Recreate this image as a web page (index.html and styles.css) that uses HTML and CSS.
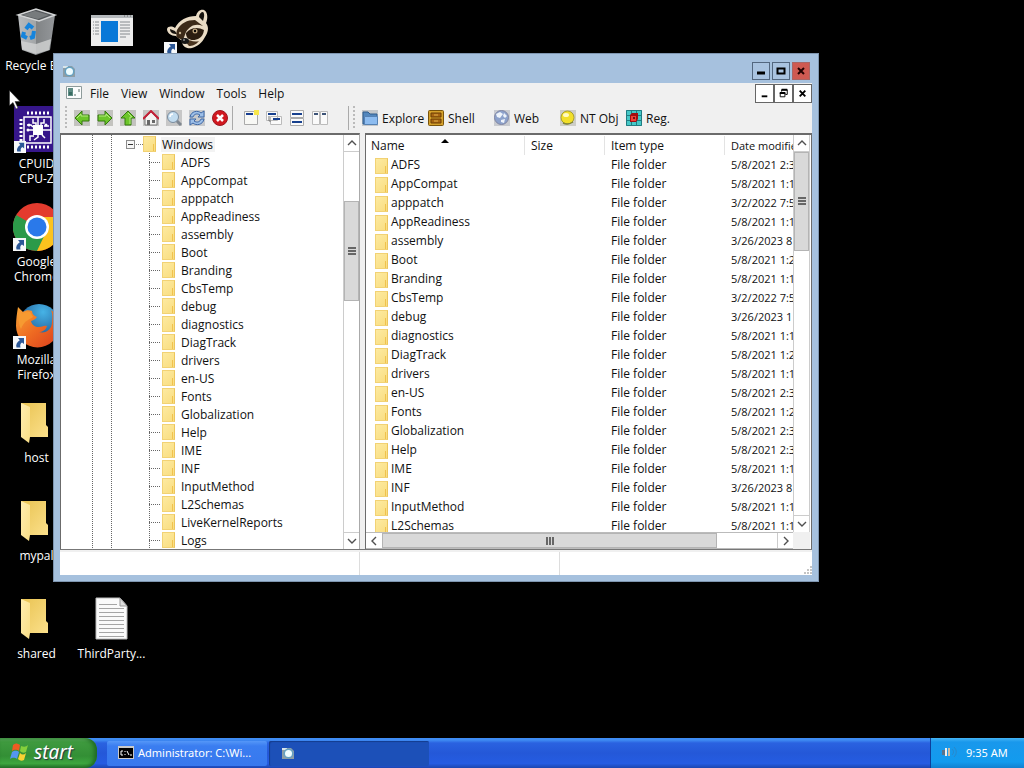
FILE: index.html
```html
<!DOCTYPE html>
<html lang="en">
<head>
<meta charset="utf-8">
<title>Desktop</title>
<link rel="stylesheet" href="styles.css">
</head>
<body>
<svg class="defs" aria-hidden="true">
  <defs>
    <linearGradient id="gf" x1="0" y1="0" x2="1" y2="1"><stop offset="0" stop-color="#e9c352"/><stop offset="1" stop-color="#fbe08b"/></linearGradient>
    <linearGradient id="gfl" x1="0" y1="0" x2="1" y2="1"><stop offset="0" stop-color="#ffedb0"/><stop offset="1" stop-color="#fadf86"/></linearGradient>
    <linearGradient id="gbin" x1="0" y1="0" x2="1" y2="0"><stop offset="0" stop-color="#b9bcbe"/><stop offset=".48" stop-color="#a2a5a7"/><stop offset=".5" stop-color="#818486"/><stop offset="1" stop-color="#94979a"/></linearGradient>
    <linearGradient id="gfox" x1="0" y1="0" x2="1" y2="1"><stop offset="0" stop-color="#f8a534"/><stop offset=".5" stop-color="#ee6b22"/><stop offset="1" stop-color="#d93c1c"/></linearGradient>
    <radialGradient id="ggl" cx=".6" cy=".2" r=".9"><stop offset="0" stop-color="#46b3e6"/><stop offset="1" stop-color="#123a78"/></radialGradient>
    <symbol id="bigfolder" viewBox="0 0 28 42"><path d="M1 1h25v22l2 2v10H6z" fill="url(#gf)"/><path d="M1 1l9 4v30l-1 6-8-6z" fill="url(#gfl)"/></symbol>
    <symbol id="shortcut" viewBox="0 0 13 13"><path d="M0 0h13v13H0z" fill="#f6f8fa"/><path d="M5 2h6v6L9 6.500C7 8 7 9 7.500 11.500H3.500C2.500 8.500 4 6 6.800 4.200z" fill="#2b5797"/></symbol>
    <symbol id="arrow" viewBox="0 0 16 16"><path d="M0 0h16v16H0z" fill="#c3c3bf"/><path d="M1 8l7-7v4h7v6H8v4z" fill="#6cc52a" stroke="#34780f"/><path d="M3 8l4-4v2h7" fill="none" stroke="#b4ea7e"/></symbol>
    <symbol id="app" viewBox="0 0 14 14"><path d="M1 2h9l3 3v8H1z" fill="#8f9da5"/><path d="M1 2h5v2H1z" fill="#d9e5e9"/><circle cx="7.500" cy="7.500" r="5" fill="#64a1c2"/><circle cx="7.500" cy="7.500" r="3.500" fill="#effcff"/></symbol>
    <symbol id="up" viewBox="0 0 10 10"><path d="M1 7l4-4 4 4" fill="none" stroke="#505050" stroke-width="1.400"/></symbol>
  </defs>
</svg>

<main class="desktop">
  <div class="icons">
    <div class="shortcut c1 r1"><svg class="pic" viewBox="0 0 48 48"><path d="M5 8l18-6 19 6-5 35-14 5-14-5z" fill="url(#gbin)"/><path d="M5 8l18-6 19 6-16 6z" fill="#54585b" stroke="#d3d5d6" stroke-width="1.500"/><path d="M9 8l13-4 14 4-11 4z" fill="#777b7d"/><path d="M8 34l15 3 15-5-2 11-13 4-14-5z" fill="#d2d3d3" opacity=".8"/><g fill="none" stroke="#1684dc" stroke-width="4"><path d="M13 22l3-4 4 3"/><path d="M21 24l-1 6-3 1"/><path d="M14 31l-4-2 1-4"/></g></svg><span>Recycle Bin</span></div>
    <div class="shortcut c2 r1"><svg class="pic" viewBox="0 0 48 48"><path d="M3 8h42v31H3z" fill="#ededed"/><path d="M3 8h42v3H3z" fill="#b5b9bc"/><path d="M36 9h1m2 0h1m2 0h1" stroke="#666"/><path d="M13 14h17v21H13z" fill="#0878d8"/><path d="M5 15h1M5 18h1M5 21h1M5 24h1M5 27h1M7 15h4M7 18h4M7 21h4M7 24h4M7 27h4M32 15h10M32 18h10M32 21h10M32 24h10M32 27h10M32 30h6" stroke="#858a8e"/></svg></div>
    <div class="shortcut c3 r1"><svg class="pic" viewBox="0 0 48 48"><path d="M3 22c1-3 5-3 8-1 4-8 12-12 21-12 1-4 4-7 8-6 4 2 4 9 2 13 4 5 1 11-1 14-3 6-7 9-13 11-5 1-10-1-10-7l-6-5c-5 0-9-3-9-7z" fill="#eadcc5"/><path d="M6 22l5 2 2 3c-4 0-7-1-7-5zM35 10c0-3 2-5 4-5 2 2 1 6 0 9z" fill="#17130e"/><path d="M13 23c4-7 10-10 18-10l8 6c-8-3-13 0-17 6l-3 8-5-2c-2-1-2-5-1-8z" fill="#3c2a18"/><path d="M22 26c5-6 12-6 18-3-1 8-7 10-11 10-4 0-7-2-7-7z" fill="#2b1d10"/><path d="M20 33c5-1 9 3 15 1-3 4-7 5-10 5z" fill="#4a3520"/><circle cx="31" cy="24" r="2.500" fill="#bfa67f"/><circle cx="31" cy="24" r="1.200" fill="#000"/><circle cx="16" cy="26" r="1.200" fill="#c9b694"/><ellipse cx="21" cy="34" rx="4" ry="3" fill="#161616"/><circle cx="20" cy="33" r="1" fill="#888"/><use href="#shortcut" x="0" y="35" width="13" height="13"/></svg></div>
    <div class="shortcut c1 r2"><svg class="pic" viewBox="0 0 48 48"><path d="M1 1h47v46H1z" fill="#36168a"/><g fill="none" stroke="#fff"><path d="M14 8h22M14 42h22" stroke-width="3" stroke-dasharray="2 2"/><path d="M8 14v22M42 14v22" stroke-width="3" stroke-dasharray="2 2"/><path d="M11 12h27v26H11z" stroke-width="1.500"/><path d="M25 12v8M20 14v4h3v3M31 14v4h-3v3M14 20h4l2 2M14 25h6M30 25h8M31 21h5M25 29v3l-4 3M17 36v-5h4M29 30l3 3" stroke-width="1.500"/></g><path d="M20 20h10v10H20z" fill="#fff"/><g fill="#fff"><circle cx="16" cy="20" r="1.500"/><circle cx="15" cy="25" r="1.500"/><circle cx="33" cy="20" r="1.500"/></g><use href="#shortcut" x="1" y="36" width="12" height="12"/></svg><span>CPUID<br>CPU-Z</span></div>
    <div class="shortcut c1 r3"><svg class="pic" viewBox="0 0 48 48"><circle cx="24" cy="24" r="24" fill="#e33b2e"/><path d="M24 24L3.200 12A24 24 0 0 0 24 48l9-16z" fill="#2c9a49"/><path d="M24 14h21.600A24 24 0 0 1 24 48l9-19z" fill="#fcc31e"/><circle cx="24" cy="24" r="12" fill="#fff"/><circle cx="24" cy="24" r="9.500" fill="#2a79ea"/><use href="#shortcut" x="0" y="35" width="13" height="13"/></svg><span>Google Chrome</span></div>
    <div class="shortcut c1 r4"><svg class="pic" viewBox="0 0 48 48"><circle cx="26" cy="23" r="20" fill="url(#ggl)"/><path d="M5 6l5 5c3-2 6-2 9-1 0 3 2 5 5 6-2 3-4 3-6 4 1 4 4 6 8 6 3 0 5-2 8-1-1 4-5 6-8 6 7 2 13-3 13-10 1-7 0-9-1-12 6 5 9 9 8 16a21 21 0 0 1-43 0C3 18 4 12 5 6z" fill="url(#gfox)"/><path d="M6 9l3 4c3-2 6-2 8-2l3 5-5 3c-4 2-6 6-7 9-3-6-3-13-2-19z" fill="#f69a31"/><use href="#shortcut" x="0" y="35" width="13" height="13"/></svg><span>Mozilla Firefox</span></div>
    <div class="shortcut c1 r5"><svg class="pic" viewBox="0 0 48 48"><use href="#bigfolder" x="7" y="3" width="28" height="42"/></svg><span>host</span></div>
    <div class="shortcut c1 r6"><svg class="pic" viewBox="0 0 48 48"><use href="#bigfolder" x="7" y="3" width="28" height="42"/></svg><span>mypal</span></div>
    <div class="shortcut c1 r7"><svg class="pic" viewBox="0 0 48 48"><use href="#bigfolder" x="7" y="3" width="28" height="42"/></svg><span>shared</span></div>
    <div class="shortcut c2 r7"><svg class="pic" viewBox="0 0 48 48"><path d="M8 3h24l7 8v33H8z" fill="#fafafa" stroke="#bbb"/><path d="M32 3v8h7z" fill="#ddd" stroke="#999"/><path d="M11 9.500h18M11 13.500h25M11 17.500h25M11 21.500h25M11 25.500h25M11 29.500h25M11 33.500h25M11 37.500h25M11 41.500h25" stroke="#a5a5a5"/></svg><span>ThirdParty...</span></div>
  </div>

  <section class="window" aria-label="File explorer">
    <header class="titlebar">
      <svg class="appicon"><use href="#app"/></svg>
      <div class="caption">
        <button aria-label="Minimize"><svg viewBox="0 0 16 16"><path d="M4 10h8" stroke="#000" stroke-width="3"/></svg></button>
        <button aria-label="Maximize"><svg viewBox="0 0 16 16"><path d="M4.500 5.500h7v5h-7z" fill="none" stroke="#000" stroke-width="2"/></svg></button>
        <button class="close" aria-label="Close"><svg viewBox="0 0 16 16"><path d="M5 5l6 6M11 5l-6 6" stroke="#200" stroke-width="2"/></svg></button>
      </div>
    </header>
    <div class="client">
      <nav class="menubar">
        <svg class="mdiicon" viewBox="0 0 16 14"><path d="M.5.500h15v12H.5z" fill="#fcfdfd" stroke="#8e9b9b"/><path d="M2 2h5v8H2z" fill="#5e8c84"/><path d="M3 6h3v3H3z" fill="#396c62"/><path d="M8 9h2M13 3v3" stroke="#5d706c"/></svg>
        <button>File</button><button>View</button><button>Window</button><button>Tools</button><button>Help</button>
        <div class="mdi">
          <button aria-label="Minimize child"><svg viewBox="0 0 16 16"><path d="M5 11h6" stroke="#000" stroke-width="2"/></svg></button>
          <button aria-label="Restore child"><svg viewBox="0 0 16 16"><path d="M6 6V4h6v5h-2M4.500 7.500h5v4h-5z" fill="none" stroke="#000"/><path d="M6 4h6M4 7.500h6" stroke="#000" stroke-width="2"/></svg></button>
          <button aria-label="Close child"><svg viewBox="0 0 16 16"><path d="M5 5l6 6M11 5l-6 6" stroke="#000" stroke-width="2"/></svg></button>
        </div>
      </nav>
      <div class="toolbar">
        <div class="band tools">
          <button aria-label="Back"><svg><use href="#arrow"/></svg></button>
          <button aria-label="Forward"><svg class="flip"><use href="#arrow"/></svg></button>
          <button aria-label="Up"><svg class="turn"><use href="#arrow"/></svg></button>
          <button aria-label="Home"><svg viewBox="0 0 16 16"><path d="M0 0h16v16H0z" fill="#c5c5c3"/><path d="M2 8l6-6 6 6v7H2z" fill="#f4f4f2" stroke="#777"/><path d="M0 9l8-8 8 8" fill="none" stroke="#c51f35" stroke-width="2"/><path d="M4 10h3v5H4zM9 10h3v3H9z" fill="#686868"/></svg></button>
          <button aria-label="Search"><svg viewBox="0 0 16 16"><path d="M0 0h16v16H0z" fill="#c7c7c7"/><path d="M10 10l5 5" stroke="#7f8790" stroke-width="3"/><circle cx="7" cy="7" r="5.500" fill="#c2dcef" stroke="#798b9d"/><path d="M4 7c0-2 1-3 3-3" fill="none" stroke="#fff" stroke-width="1.500"/></svg></button>
          <button aria-label="Refresh"><svg viewBox="0 0 16 16"><path d="M0 0h16v16H0z" fill="#c7c9cc"/><path d="M1 7c1-6 8-7 11-4l3-2v6H9l2-2C8 3 5 4 4 7zM15 9c-1 6-8 7-11 4l-3 2V9h6l-2 2c3 2 6 1 7-2z" fill="#9dbfe8" stroke="#3f68a6"/></svg></button>
          <button aria-label="Stop"><svg viewBox="0 0 16 16"><circle cx="8" cy="8" r="7.500" fill="#d11820" stroke="#9c1720"/><path d="M5 5l6 6M11 5l-6 6" stroke="#fff" stroke-width="2.500"/></svg></button>
        </div>
        <div class="band views">
          <button aria-label="New window"><svg viewBox="0 0 16 16"><path d="M1.500 1.500h13v13h-13z" fill="#f8f8f5" stroke="#aaa"/><path d="M3 4h7" stroke="#183e91" stroke-width="2"/><path d="M11 0h5v5h-5z" fill="#f8e74c"/></svg></button>
          <button aria-label="Cascade"><svg viewBox="0 0 16 16"><path d="M.5 1.500h11v9H.5zM4.500 6.500h11v8h-11z" fill="#fafafa" stroke="#bbb"/><path d="M2 4h8M7 9h7" stroke="#17408e" stroke-width="2"/><path d="M3 6v5h2" fill="none" stroke="#777"/></svg></button>
          <button aria-label="Tile horizontally"><svg viewBox="0 0 16 16"><path d="M1.500.500h13v7h-13zM1.500 8.500h13v7h-13z" fill="#fafafa" stroke="#aaa"/><path d="M3 4h10M3 12h10" stroke="#17408e" stroke-width="2"/></svg></button>
          <button aria-label="Tile vertically"><svg viewBox="0 0 16 16"><path d="M.5 1.500h7v13h-7zM8.500 1.500h7v13h-7z" fill="#fafafa" stroke="#bbb"/><path d="M2 4h4M10 4h4" stroke="#3c5377" stroke-width="2"/></svg></button>
        </div>
        <div class="band places">
          <button><svg viewBox="0 0 16 16"><path d="M0 0h16v16H0z" fill="#c4c7ca"/><path d="M1 14V2h5l2 2h7v10z" fill="#5387bd" stroke="#315d8d"/><path d="M2.500 6.500h13v8h-13z" fill="#8dbcf0" stroke="#5682b4"/></svg>Explore</button>
          <button><svg viewBox="0 0 16 16"><rect x=".5" y=".5" width="15" height="15" rx="1" fill="#d5a12b" stroke="#79540c"/><path d="M3 3h10v4H3zM3 9h10v4H3z" fill="#a86512" stroke="#6c3e06"/><path d="M6 5h4M6 11h4" stroke="#e2b24d"/></svg>Shell</button>
          <button><svg viewBox="0 0 16 16"><path d="M0 0h16v16H0z" fill="#c9cbd0"/><circle cx="7.500" cy="7.500" r="7" fill="#8da2cc" stroke="#8186a2"/><path d="M2 4l4-2 3 2-3 4-3-1zM10 3l3 3-2 2-2-2zM7 10l4-1-1 4-3-1z" fill="#eef3fa"/></svg>Web</button>
          <button><svg viewBox="0 0 16 16"><path d="M0 0h16v16H0z" fill="#cdcdc7"/><circle cx="7.500" cy="7.500" r="6.500" fill="#f2df28" stroke="#aaa02b"/><ellipse cx="6" cy="5" rx="3" ry="2" fill="#fffac0"/><path d="M3 13c4 2 7 1 10-1" fill="none" stroke="#81863b" stroke-width="1.500"/></svg>NT Obj</button>
          <button><svg viewBox="0 0 16 16"><path d="M0 0h16v16H0z" fill="#45c8c7"/><path d="M.5.500h15v15H.5zM0 5.500h16M0 10.500h16M5.500 0v16M10.500 0v16" fill="none" stroke="#217b81"/><path d="M4 5l2-2h6v6l-2 3H4z" fill="#a40c10"/><path d="M5 6h5v5H5z" fill="#f04136"/><path d="M7 7h2v2H7z" fill="#731014"/></svg>Reg.</button>
        </div>
      </div>

      <div class="panes">
        <div class="pane treepane">
          <div class="tree">
            <div class="root"><button class="expander" aria-label="Collapse Windows"></button><i class="stub"></i><i class="folder"></i><span>Windows</span></div>
            <ul>
              <li><i class="folder"></i>ADFS</li><li><i class="folder"></i>AppCompat</li><li><i class="folder"></i>apppatch</li><li><i class="folder"></i>AppReadiness</li><li><i class="folder"></i>assembly</li><li><i class="folder"></i>Boot</li><li><i class="folder"></i>Branding</li><li><i class="folder"></i>CbsTemp</li><li><i class="folder"></i>debug</li><li><i class="folder"></i>diagnostics</li><li><i class="folder"></i>DiagTrack</li><li><i class="folder"></i>drivers</li><li><i class="folder"></i>en-US</li><li><i class="folder"></i>Fonts</li><li><i class="folder"></i>Globalization</li><li><i class="folder"></i>Help</li><li><i class="folder"></i>IME</li><li><i class="folder"></i>INF</li><li><i class="folder"></i>InputMethod</li><li><i class="folder"></i>L2Schemas</li><li><i class="folder"></i>LiveKernelReports</li><li><i class="folder"></i>Logs</li>
            </ul>
          </div>
          <div class="scroll vertical treescroll">
            <button aria-label="Scroll tree up"><svg><use href="#up"/></svg></button>
            <div class="before"></div><div class="thumb"></div><div class="after"></div>
            <button aria-label="Scroll tree down"><svg class="half"><use href="#up"/></svg></button>
          </div>
        </div>
        <div class="pane listpane">
          <div class="list">
            <table>
              <colgroup><col class="name"><col class="size"><col class="type"><col class="date"></colgroup>
              <thead><tr><th class="sorted">Name</th><th>Size</th><th>Item type</th><th>Date modified</th></tr></thead>
              <tbody>
                <tr><td><i class="folder"></i>ADFS</td><td></td><td>File folder</td><td>5/8/2021 2:3</td></tr>
                <tr><td><i class="folder"></i>AppCompat</td><td></td><td>File folder</td><td>5/8/2021 1:1</td></tr>
                <tr><td><i class="folder"></i>apppatch</td><td></td><td>File folder</td><td>3/2/2022 7:5</td></tr>
                <tr><td><i class="folder"></i>AppReadiness</td><td></td><td>File folder</td><td>5/8/2021 1:1</td></tr>
                <tr><td><i class="folder"></i>assembly</td><td></td><td>File folder</td><td>3/26/2023 8</td></tr>
                <tr><td><i class="folder"></i>Boot</td><td></td><td>File folder</td><td>5/8/2021 1:2</td></tr>
                <tr><td><i class="folder"></i>Branding</td><td></td><td>File folder</td><td>5/8/2021 1:1</td></tr>
                <tr><td><i class="folder"></i>CbsTemp</td><td></td><td>File folder</td><td>3/2/2022 7:5</td></tr>
                <tr><td><i class="folder"></i>debug</td><td></td><td>File folder</td><td>3/26/2023 1</td></tr>
                <tr><td><i class="folder"></i>diagnostics</td><td></td><td>File folder</td><td>5/8/2021 1:1</td></tr>
                <tr><td><i class="folder"></i>DiagTrack</td><td></td><td>File folder</td><td>5/8/2021 1:2</td></tr>
                <tr><td><i class="folder"></i>drivers</td><td></td><td>File folder</td><td>5/8/2021 1:1</td></tr>
                <tr><td><i class="folder"></i>en-US</td><td></td><td>File folder</td><td>5/8/2021 2:3</td></tr>
                <tr><td><i class="folder"></i>Fonts</td><td></td><td>File folder</td><td>5/8/2021 1:2</td></tr>
                <tr><td><i class="folder"></i>Globalization</td><td></td><td>File folder</td><td>5/8/2021 2:3</td></tr>
                <tr><td><i class="folder"></i>Help</td><td></td><td>File folder</td><td>5/8/2021 2:3</td></tr>
                <tr><td><i class="folder"></i>IME</td><td></td><td>File folder</td><td>5/8/2021 1:1</td></tr>
                <tr><td><i class="folder"></i>INF</td><td></td><td>File folder</td><td>3/26/2023 8</td></tr>
                <tr><td><i class="folder"></i>InputMethod</td><td></td><td>File folder</td><td>5/8/2021 1:1</td></tr>
                <tr><td><i class="folder"></i>L2Schemas</td><td></td><td>File folder</td><td>5/8/2021 1:1</td></tr>
              </tbody>
            </table>
          </div>
          <div class="scroll vertical listscroll">
            <button aria-label="Scroll list up"><svg><use href="#up"/></svg></button>
            <div class="thumb"></div><div class="after"></div>
            <button aria-label="Scroll list down"><svg class="half"><use href="#up"/></svg></button>
          </div>
          <div class="scroll horizontal">
            <button aria-label="Scroll left"><svg class="left"><use href="#up"/></svg></button>
            <div class="thumb"></div><div class="after"></div>
            <button aria-label="Scroll right"><svg class="right"><use href="#up"/></svg></button>
          </div>
          <div class="corner"></div>
        </div>
      </div>
      <footer class="status"><div></div><div></div><div class="grow"><svg viewBox="0 0 10 10"><path d="M8 1h2v2H8zM8 4h2v2H8zM8 7h2v2H8zM5 4h2v2H5zM5 7h2v2H5zM2 7h2v2H2z" fill="#c4c4c4"/></svg></div></footer>
    </div>
  </section>
  <svg class="pointer" viewBox="0 0 12 20"><path d="M.5.500v15l3.500-3 3 6.500 2-1-3-6.500h5z" fill="#fff" stroke="#222" stroke-width=".5"/></svg>
</main>

<footer class="taskbar">
  <button class="start"><svg viewBox="0 0 20 20"><path d="M3 3c2-2 4-2 7 0L9 9C6 7 4 8 2 9z" fill="#ee5b22"/><path d="M11 4c3 1 5 1 7-1l-2 7c-2 1-4 1-6-1z" fill="#85cf3c"/><path d="M2 10c2-1 4-2 7 0l-2 7c-3-2-5-1-7 0z" fill="#5596f0"/><path d="M10 11c2 2 4 2 6 0l-2 7c-2 1-4 1-6-1z" fill="#f8d233"/></svg>start</button>
  <div class="tasks">
    <button class="task"><svg viewBox="0 0 16 14"><path d="M0 0h16v13H0z" fill="#c9c9c9"/><path d="M1 2h14v10H1z" fill="#000"/><path d="M5 5H3v4h2M7 5v1M7 8v1M9 5l2 4M12 9h2" fill="none" stroke="#fff"/></svg>Administrator: C:\Wi...</button>
    <button class="task active" aria-label="File explorer"><svg><use href="#app"/></svg></button>
  </div>
  <div class="tray"><svg viewBox="0 0 16 14"><path d="M1 5h3v5H1z" fill="#58748c"/><path d="M4 3h2v8H4z" fill="#eee"/><path d="M7 3h2v8H7z" fill="#c9b9a3"/><path d="M11 4c2 2 2 4 0 6M13 2c3 3 3 7 0 10" fill="none" stroke="#2b88c9"/></svg><span>9:35 AM</span></div>
</footer>
</body>
</html>
```
FILE: styles.css
```css
* { box-sizing: border-box; }
body {
  margin: 0;
  height: 100vh;
  display: flex;
  flex-direction: column;
  overflow: hidden;
  background: #000;
  font: 12px/15px "Open Sans", "Noto Sans", sans-serif;
  color: #111;
}
button { font: inherit; color: inherit; padding: 0; border: 0; background: none; }
svg { display: block; flex: none; }
.defs { position: absolute; width: 0; height: 0; }

/* desktop */
.desktop { position: relative; flex: 1; min-height: 0; }
.icons {
  display: grid;
  grid-template-columns: 73px 77px 75px;
  grid-auto-rows: 98px;
  padding-top: 7px;
}
.shortcut { display: flex; flex-direction: column; align-items: center; gap: 3px; color: #fff; text-align: center; }
.shortcut span { width: max-content; max-width: 72px; }
.pic { width: 48px; height: 48px; }
.c1 { grid-column: 1; } .c2 { grid-column: 2; } .c3 { grid-column: 3; }
.r1 { grid-row: 1; } .r2 { grid-row: 2; } .r3 { grid-row: 3; } .r4 { grid-row: 4; }
.r5 { grid-row: 5; } .r6 { grid-row: 6; } .r7 { grid-row: 7; }
.pointer { position: absolute; left: 9px; top: 90px; width: 12px; height: 20px; }

/* window */
.window {
  position: absolute;
  left: 53px;
  top: 53px;
  width: 766px;
  height: 529px;
  display: flex;
  flex-direction: column;
  background: #a6c1de;
  border: 1px solid #7f96b0;
  padding: 0 6px 6px;
}
.titlebar { display: flex; align-items: center; height: 29px; padding: 4px 2px 0; }
.appicon { width: 14px; height: 14px; }
.caption { display: flex; gap: 2px; margin-left: auto; }
.caption button { width: 18px; height: 18px; border: 1px solid #53677f; background: #a9c3e0; }
.caption .close { background: #cf5a52; border-color: #a66; }
.client { flex: 1; min-height: 0; display: flex; flex-direction: column; background: #f0f0f0; }

.menubar { display: flex; align-items: center; height: 20px; padding-left: 6px; }
.menubar > button { padding: 0 6px; }
.mdiicon { width: 16px; height: 14px; margin-right: 2px; }
.mdi { display: flex; margin-left: auto; }
.mdi button { width: 19px; height: 19px; background: #fff; border: 1px solid #666; padding: 0 1px; }

.toolbar { display: flex; align-items: center; height: 30px; padding-left: 5px; }
.band { display: flex; align-items: center; height: 24px; }
.toolbar svg { width: 16px; height: 16px; }
.tools, .places {
  background: repeating-linear-gradient(#bbb 0 2px, transparent 2px 4px) 0 0 / 2px 100% no-repeat;
}
.tools, .views { gap: 7px; }
.tools { padding: 0 4px 0 9px; }
.views { border-left: 1px solid #aaa; padding: 0 20px 0 10px; }
.places { border-left: 1px solid #aaa; padding-left: 13px; background-position-x: 4px; }
.places button { display: flex; align-items: center; gap: 4px; width: 66px; white-space: nowrap; }
.flip { transform: scaleX(-1); }
.turn { transform: rotate(90deg); }
.half { transform: rotate(180deg); }
.left { transform: rotate(-90deg); }
.right { transform: rotate(90deg); }

/* panes */
.panes { flex: 1; min-height: 0; display: grid; grid-template-columns: 300px 1fr; column-gap: 5px; border-bottom: 1px solid #777; }
.pane { min-height: 0; min-width: 0; overflow: hidden; background: #fff; border: solid #6b6b6b; border-width: 2px 1px 0 1px; }
.treepane { display: flex; border-right-color: #aaa; }
.tree {
  flex: 1;
  background:
    repeating-linear-gradient(#666 0 1px, transparent 1px 2px) 31px 0 / 1px 100% no-repeat,
    repeating-linear-gradient(#666 0 1px, transparent 1px 2px) 50px 0 / 1px 100% no-repeat;
}
.root { display: flex; align-items: center; height: 18px; padding-left: 65px; }
.root span { background: #f3f3f3; margin-left: 5px; padding: 0 2px 0 1px; }
.expander {
  width: 9px;
  height: 9px;
  border: 1px solid #8b8b8b;
  background: linear-gradient(#333, #333) center / 5px 1px no-repeat #f6f6f6;
}
.stub { width: 8px; height: 1px; background: repeating-linear-gradient(90deg, transparent 0 1px, #777 1px 2px); }
.tree ul {
  list-style: none;
  margin: 0;
  padding: 0 0 0 88px;
  background: repeating-linear-gradient(#666 0 1px, transparent 1px 2px) 88px 0 / 1px 100% no-repeat;
}
.tree li {
  display: flex;
  align-items: center;
  gap: 6px;
  height: 18px;
  padding-left: 13px;
  background: repeating-linear-gradient(90deg, #666 0 1px, transparent 1px 2px) 0 9px / 12px 1px no-repeat;
}
.folder {
  flex: none;
  width: 13px;
  height: 16px;
  background: linear-gradient(#f0c24e, #f0c24e) 9px 7px / 1px 7px no-repeat, linear-gradient(135deg, #fdeaa0, #f9dd80);
  border: 1px solid #f2d274;
  border-right-color: #ecc65c;
}

.listpane { display: grid; grid-template-columns: 1fr 17px; grid-template-rows: 1fr 17px; padding-right: 1px; }
.list { overflow: hidden; min-width: 0; min-height: 0; padding-top: 1px; }
table { table-layout: fixed; width: 489px; border-collapse: separate; border-spacing: 0; }
.name { width: 159px; } .size { width: 80px; } .type { width: 120px; } .date { width: 130px; }
th, td { height: 19px; padding: 0 0 0 6px; line-height: 15px; text-align: left; font-weight: normal; white-space: nowrap; }
th { border-right: 1px solid #e3e3e3; padding-left: 5px; }
th + th { padding-left: 6px; }
th:last-child, td:last-child { font-size: 11px; }
td:first-child { padding-left: 9px; }
td .folder { display: inline-block; vertical-align: middle; margin: -3px 3px -3px 0; }
.sorted { position: relative; }
.sorted::after {
  content: "";
  position: absolute;
  left: 75px;
  top: 3px;
  border: solid transparent;
  border-width: 0 4px 4px;
  border-bottom-color: #000;
}

.scroll { display: flex; background: #fff; }
.scroll button { flex: none; height: 17px; display: flex; align-items: center; justify-content: center; background: #fff; }
.scroll svg { width: 10px; height: 10px; }
.vertical { flex-direction: column; width: 17px; border: solid #ccc; border-width: 0 1px; }
.vertical button:first-child { border-bottom: 1px solid #ccc; }
.vertical button:last-child { border-top: 1px solid #ccc; }
.treescroll { width: 16px; border-right: 0; }
.horizontal { border: 1px solid #bbb; border-width: 1px 0; }
.horizontal button { width: 16px; height: 15px; }
.horizontal button:last-child { border-left: 1px solid #ccc; }
.thumb { background: #d9d9d9; border: 1px solid #b4b4b4; display: grid; place-items: center; }
.thumb::after { content: ""; width: 8px; height: 8px; background: repeating-linear-gradient(#666 0 2px, transparent 2px 3px); }
.horizontal .thumb::after { background: repeating-linear-gradient(90deg, #666 0 2px, transparent 2px 3px); }
.treescroll .before { flex: 49; } .treescroll .thumb { flex: 98; } .treescroll .after { flex: 232; }
.listscroll .thumb { flex: 97; } .listscroll .after { flex: 265; }
.horizontal .thumb { flex: 335; } .horizontal .after { flex: 60; }
.corner { background: #f0f0f0; }

.status { display: grid; grid-template-columns: 300px 200px 1fr; height: 25px; background: #fff; border-top: 2px solid #f0f0f0; }
.status div { border-right: 1px solid #ddd; }
.status .grow { display: flex; justify-content: flex-end; align-items: flex-end; border-right: 0; }
.status svg { width: 10px; height: 10px; }

/* taskbar */
.taskbar {
  flex: none;
  height: 30px;
  display: flex;
  color: #fff;
  font: 11px/15px "Noto Sans", "Open Sans", sans-serif;
  background: linear-gradient(#3f8cf3 0, #3f8cf3 2px, #2a62e0 5px, #2458d8 50%, #255ce2 85%, #1c46b0);
}
.start {
  width: 97px;
  display: flex;
  align-items: center;
  gap: 4px;
  padding: 0 0 2px 10px;
  border-radius: 0 12px 12px 0;
  background: linear-gradient(#5fae5f 0, #3f9a3f 4px, #338f35 60%, #3da63f 85%, #26762a);
  box-shadow: inset -3px 0 4px #1f6a24;
  font: italic 19px/24px "Noto Sans", "Open Sans", sans-serif;
  text-shadow: 1px 1px 1px #234;
}
.start svg { width: 20px; height: 20px; }
.tasks { flex: 1; display: flex; gap: 2px; padding: 3px 0 2px 10px; }
.task { width: 160px; display: flex; align-items: center; gap: 4px; padding: 0 11px 2px; border-radius: 2px; background: linear-gradient(#5597f8, #3a7df0 20%, #3778ee); white-space: nowrap; }
.task svg { width: 16px; height: 14px; }
.active { background: #1c50b8; box-shadow: inset 1px 1px 1px #153c8e; }
.tray { width: 94px; display: flex; align-items: center; gap: 9px; padding: 0 0 2px 10px; border-left: 1px solid #0d3f9b; background: linear-gradient(#45b5f5 0, #1998ec 4px, #129bee 80%, #1180cf); }
.tray svg { width: 16px; height: 14px; }
```
